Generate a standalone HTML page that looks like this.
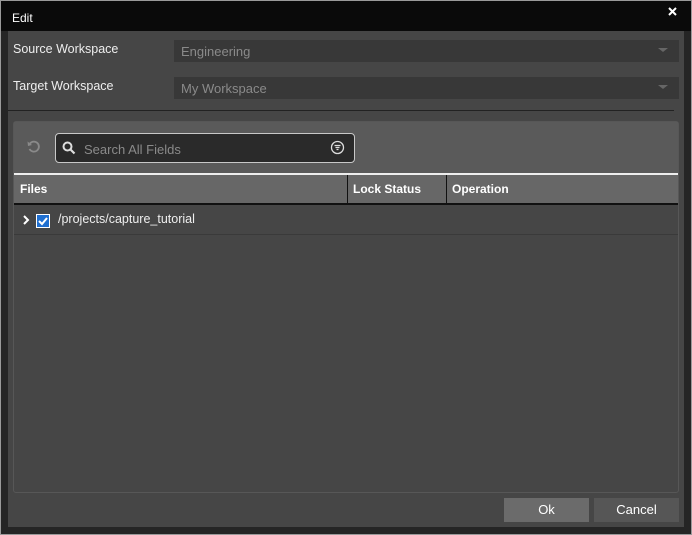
<!DOCTYPE html>
<html><head><style>
*{margin:0;padding:0;box-sizing:border-box}
body{width:692px;height:535px;background:#9a9a9a;font-family:"Liberation Sans",sans-serif;position:relative;overflow:hidden}
.a{position:absolute}
.t{color:#eee;font-size:12.5px}
</style></head><body>
<div class="a" style="left:1px;top:1px;width:690px;height:533px;background:#252525"></div>
<div class="a" style="left:1px;top:1px;width:690px;height:30px;background:#0a0a0a"></div>
<div class="a t" style="left:12px;top:11px;font-size:12px;color:#fff">Edit</div>
<svg class="a" style="left:668px;top:7px" width="9" height="9" viewBox="0 0 9 9"><path d="M1 1L8 8M8 1L1 8" stroke="#fff" stroke-width="2"/></svg>
<div class="a" style="left:8px;top:31px;width:676px;height:496px;background:#464646"></div>
<div class="a t" style="left:13px;top:42px">Source Workspace</div>
<div class="a t" style="left:13px;top:79px">Target Workspace</div>
<div class="a" style="left:174px;top:40px;width:505px;height:22px;background:#383838"></div>
<div class="a" style="left:174px;top:77px;width:505px;height:22px;background:#383838"></div>
<div class="a" style="left:181px;top:44px;color:#8a8a8a;font-size:13px">Engineering</div>
<div class="a" style="left:181px;top:81px;color:#8a8a8a;font-size:13px">My Workspace</div>
<div class="a" style="left:658px;top:48px;border-left:5px solid transparent;border-right:5px solid transparent;border-top:4px solid #666"></div>
<div class="a" style="left:658px;top:85px;border-left:5px solid transparent;border-right:5px solid transparent;border-top:4px solid #666"></div>
<div class="a" style="left:8px;top:110px;width:666px;height:1px;background:#222"></div>
<div class="a" style="left:13px;top:121px;width:666px;height:372px;background:#464646;border:1px solid #575757;border-radius:3px"></div>
<div class="a" style="left:14px;top:122px;width:664px;height:51px;background:#5a5a5a"></div>
<svg class="a" style="left:26px;top:139px" width="16" height="16" viewBox="0 0 16 16"><path d="M4 4.5A5 5 0 1 1 3.5 10" fill="none" stroke="#8a8a8a" stroke-width="1.8"/><path d="M1.5 2.5L2 7L6 6Z" fill="#8a8a8a"/></svg>
<div class="a" style="left:55px;top:133px;width:300px;height:30px;background:#2a2a2a;border:1px solid #c8c8c8;border-radius:4px"></div>
<svg class="a" style="left:62px;top:141px" width="14" height="14" viewBox="0 0 14 14"><circle cx="5.5" cy="5.5" r="4" fill="none" stroke="#ddd" stroke-width="2"/><path d="M8.5 8.5L12.5 12.5" stroke="#ddd" stroke-width="2.2"/></svg>
<div class="a" style="left:84px;top:142px;color:#8a8a8a;font-size:13px">Search All Fields</div>
<svg class="a" style="left:330px;top:140px" width="15" height="15" viewBox="0 0 15 15"><circle cx="7.5" cy="7.5" r="6" fill="none" stroke="#ddd" stroke-width="1.3"/><path d="M4.5 5.5h6M5.5 7.5h4M6.5 9.5h2" stroke="#ddd" stroke-width="1.2"/></svg>
<div class="a" style="left:14px;top:173px;width:664px;height:32px;background:#676767;border-top:2px solid #eee;border-bottom:2px solid #111"></div>
<div class="a" style="left:347px;top:175px;width:1px;height:29px;background:#111"></div>
<div class="a" style="left:446px;top:175px;width:1px;height:29px;background:#111"></div>
<div class="a t" style="left:20px;top:182px;font-weight:bold;color:#fff;font-size:12px">Files</div>
<div class="a t" style="left:353px;top:182px;font-weight:bold;color:#fff;font-size:12px">Lock Status</div>
<div class="a t" style="left:452px;top:182px;font-weight:bold;color:#fff;font-size:12px">Operation</div>
<div class="a" style="left:14px;top:234px;width:664px;height:1px;background:#3a3a3a"></div>
<svg class="a" style="left:22px;top:215px" width="8" height="10" viewBox="0 0 8 10"><path d="M2 1L6 5L2 9" fill="none" stroke="#fff" stroke-width="2"/></svg>
<div class="a" style="left:36px;top:214px;width:14px;height:14px;background:#1f6fd0;border:1px solid #fff"></div>
<svg class="a" style="left:37px;top:215px" width="12" height="12" viewBox="0 0 12 12"><path d="M2 6L5 9L10 3" fill="none" stroke="#fff" stroke-width="2"/></svg>
<div class="a t" style="left:58px;top:212px">/projects/capture_tutorial</div>
<div class="a" style="left:504px;top:498px;width:85px;height:24px;background:#6b6b6b;color:#fff;font-size:13px;text-align:center;line-height:24px">Ok</div>
<div class="a" style="left:594px;top:498px;width:85px;height:24px;background:#565656;color:#fff;font-size:13px;text-align:center;line-height:24px">Cancel</div>
</body></html>
